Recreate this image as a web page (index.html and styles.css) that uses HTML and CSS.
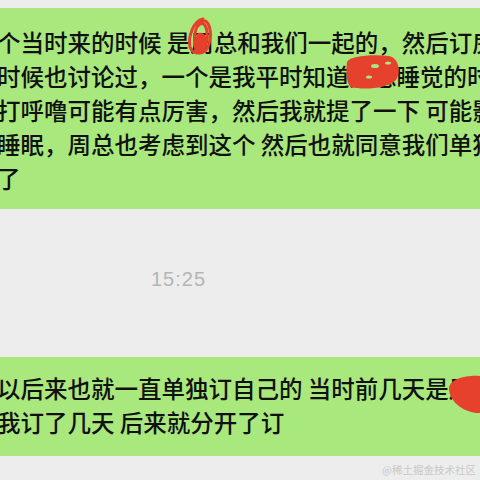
FILE: index.html
```html
<!DOCTYPE html>
<html lang="zh">
<head>
    <meta charset="UTF-8">
    <title>聊天记录</title>
    <link rel="stylesheet" href="styles.css">
</head>
<body>

<div class="chat">
    <div class="bubble bubble-top">
        <div class="line">个当时来的时候 是周总和我们一起的，然后订房</div>
        <div class="line">时候也讨论过，一个是我平时知道周总睡觉的时候</div>
        <div class="line">打呼噜可能有点厉害，然后我就提了一下 可能影响</div>
        <div class="line">睡眠，周总也考虑到这个 然后也就同意我们单独</div>
        <div class="line">了</div>
    </div>

    <div class="time">15:25</div>

    <div class="bubble bubble-bottom">
        <div class="line">以后来也就一直单独订自己的 当时前几天是周总</div>
        <div class="line">我订了几天 后来就分开了订</div>
    </div>
</div>

<!-- red marker scribbles over names -->
<svg class="marks" width="480" height="480" viewBox="0 0 480 480">
    <g fill="none" stroke="#e5402c" stroke-width="3" stroke-linecap="round">
        <path d="M203 19 C193 21 188 37 190 47 C193 56 206 55 209 44 C212 33 210 18 201 21"/>
        <path d="M199 23 C194 30 193 45 197 51 C202 55 208 43 207 32 C206 24 202 20 197 27"/>
    </g>
    <path d="M197 34 C200 31 206 33 207 40 C207 47 205 53 200 52 C195 50 194 41 197 34 Z" fill="#e5402c"/>
    <path d="M347 62 C349 56 372 54 389 56 C399 58 401 72 396 80 C388 89 362 90 351 87 C346 84 346 70 347 62 Z" fill="#e6412d"/>
    <ellipse cx="375" cy="66" rx="4" ry="2" fill="#a9e87d"/>
    <ellipse cx="388" cy="63" rx="3" ry="1.5" fill="#a9e87d"/>
    <ellipse cx="369" cy="77" rx="3" ry="1.5" fill="#a9e87d"/>
    <path d="M449 388 C450 379 466 375 480 376 L480 413 C468 414 449 404 449 388 Z" fill="#e6412d"/>
</svg>

<div class="watermark">@稀土掘金技术社区</div>

</body>
</html>
```

FILE: styles.css
```css
body {
    margin: 0;
    width: 480px;
    height: 480px;
    overflow: hidden;
    background: #ededed;
    font-family: "Noto Sans CJK SC", "Noto Sans", sans-serif;
    position: relative;
}
.chat { padding-top: 8px; }
.bubble {
    background: #a9e87d;
    color: #111;
    font-size: 23.5px;
    font-weight: 500;
    line-height: 34px;
    overflow: hidden;
}
.bubble-top { padding: 17px 0 14px; }
.bubble-bottom { padding: 14px 0 17px; }
.line {
    white-space: nowrap;
    margin-left: -3px;
}
.time {
    padding: 59px 0 67px 151px;
    line-height: 22px;
    font-family: "Liberation Sans", sans-serif;
    font-size: 20px;
    letter-spacing: 1px;
    color: #b5b5b5;
}
.marks {
    position: absolute;
    left: 0;
    top: 0;
    pointer-events: none;
}
.watermark {
    position: absolute;
    right: 4px;
    bottom: 3px;
    font-size: 10.5px;
    color: #c8c8c8;
    font-family: "Noto Sans CJK SC", sans-serif;
}
```
